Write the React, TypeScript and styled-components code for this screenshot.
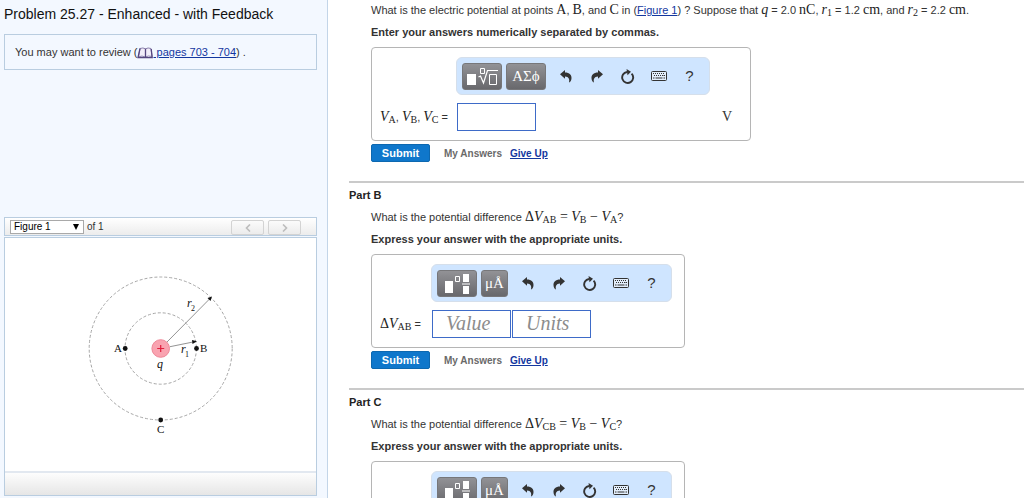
import React from "react";
import styled, { createGlobalStyle } from "styled-components";

const sans = `"Liberation Sans", Arial, sans-serif`;
const serif = `"Liberation Serif", "Times New Roman", serif`;

const GlobalStyle = createGlobalStyle`
  * { box-sizing: border-box; }
  body {
    margin: 0;
    background: #fff;
    color: #333;
    font-family: ${sans};
    font-size: 11px;
  }
`;

const Page = styled.div`
  display: flex;
  height: 100vh;
  overflow: hidden;
`;

const Sidebar = styled.aside`
  display: flex;
  flex-direction: column;
  flex: 0 0 328px;
  padding: 0 10px 2px 4px;
  border-right: 1px solid #c3d5e8;
  background: #f3f8ff;
`;

const Title = styled.h1`
  margin: 0 0 6px;
  color: #111;
  font-size: 14px;
  font-weight: 400;
  line-height: 28px;
  white-space: nowrap;
`;

const ReviewBox = styled.p`
  margin: 0;
  padding: 0 10px;
  border: 1px solid #b9cde0;
  line-height: 34px;
`;

const Link = styled.a`
  color: #13379f;
`;

const Book = styled.svg`
  width: 16px;
  height: 12px;
  vertical-align: -3px;
`;

const FigureBar = styled.div`
  display: flex;
  align-items: center;
  gap: 3px;
  height: 19px;
  margin: auto 0 1px;
  padding: 0 15px 0 5px;
  border: 1px solid #b9cde0;
  background: linear-gradient(#fff, #ececec);
  font-size: 10px;
`;

const SelectWrap = styled.label`
  display: grid;
  align-items: center;
  width: 74px;
  height: 14px;

  > * { grid-area: 1 / 1; }
  > svg { justify-self: end; margin-right: 5px; pointer-events: none; }
`;

const FigureSelect = styled.select`
  width: 100%;
  height: 14px;
  padding: 0 3px;
  appearance: none;
  border: 1px solid #a9a9a9;
  border-radius: 0;
  background: #fff;
  color: #000;
  font: 10px/12px ${sans};
`;

const Pager = styled.div`
  display: flex;
  gap: 4px;
  align-self: flex-end;
  margin-left: auto;
`;

const PagerButton = styled.button`
  display: flex;
  align-items: center;
  justify-content: center;
  width: 33px;
  height: 15px;
  padding: 0;
  border: 1px solid #d3d3d3;
  border-radius: 2px;
  background: linear-gradient(#fbfbfb, #ececec);
`;

const FigurePanel = styled.div`
  display: flex;
  flex-direction: column;
  height: 259px;
  border: 1px solid #b9cde0;
  background: #fff;
`;

const Diagram = styled.svg`
  align-self: center;
  width: 161px;
  height: 175px;
  margin-top: 27px;
  font-family: ${serif};
`;

const FigureFooter = styled.div`
  height: 24px;
  margin-top: auto;
  border-top: 2px solid #e2e8f0;
  background: linear-gradient(#fdfdfd, #e6e6e6);
`;

const Content = styled.main`
  flex: 1;
  min-width: 0;
  margin-top: -1px;
  padding-left: 21px;
  overflow-y: auto;
  scrollbar-width: none;
`;

const Part = styled.section`
  padding: 0 0 19px 22px;

  & + & { border-top: 2px solid #cacaca; }
`;

const PartTitle = styled.h2`
  margin: 0 0 0 -22px;
  padding-top: 2px;
  color: #222;
  font-size: 11px;
  line-height: 21px;
`;

const Line = styled.p<{ $strong?: boolean }>`
  margin: 0;
  font-weight: ${(p) => (p.$strong ? 700 : 400)};
  line-height: 22px;
  white-space: nowrap;
`;

const M = styled.span<{ $italic?: boolean }>`
  color: #222;
  font-family: ${serif};
  font-size: 14px;
  font-style: ${(p) => (p.$italic ? "italic" : "normal")};
  line-height: 14px;

  sub {
    font-size: 10px;
    font-style: normal;
    line-height: 0;
    vertical-align: -2px;
  }
`;

const AnswerBox = styled.div<{ $label: number; $width: number }>`
  display: grid;
  grid-template-columns: ${(p) => p.$label}px auto;
  justify-content: start;
  align-items: center;
  row-gap: 8px;
  width: ${(p) => p.$width}px;
  margin: 4px 0 3px;
  padding: 9px 8px;
  border: 1px solid #b5b5b5;
  border-radius: 4px;
`;

const Toolbar = styled.div`
  display: flex;
  grid-column: 2;
  align-items: center;
  justify-self: start;
  height: 38px;
  padding: 0 4px 0 5px;
  border: 1px solid #d5dfeb;
  border-radius: 6px;
  background: #cfe5ff;
`;

const Palette = styled.button<{ $narrow?: boolean }>`
  display: flex;
  align-items: center;
  justify-content: center;
  width: ${(p) => (p.$narrow ? 27 : 40)}px;
  height: 27px;
  margin-right: 4px;
  padding: 0;
  border: 1px solid #77777a;
  border-radius: 3px;
  background: linear-gradient(#929296, #68686c);
  color: #fff;
  font: 15px/20px ${serif};
`;

const Tool = styled.button`
  display: flex;
  align-items: center;
  justify-content: center;
  width: 31px;
  height: 28px;
  padding: 0;
  border: 0;
  background: none;
  color: #333;
  font: 15px/20px ${sans};
`;

const FieldLabel = styled.label`
  font-size: 11px;
  white-space: nowrap;
`;

const Fields = styled.div`
  display: flex;
  align-items: center;
  gap: 1px;
  padding-left: 1px;
`;

const Field = styled.input`
  width: 79px;
  height: 28px;
  padding: 0 13px;
  border: 1px solid #3e6bc8;
  background: #fff;
  font: 18px ${serif};

  &::placeholder {
    color: #8c8c8c;
    font: italic 20px ${serif};
    opacity: 1;
  }
`;

const Unit = styled.span`
  margin-left: 185px;
  font: 14px ${serif};
`;

const Actions = styled.div`
  display: flex;
  align-items: center;
  height: 18px;
  font-size: 10px;
  font-weight: 700;
`;

const Submit = styled.button`
  width: 59px;
  height: 18px;
  margin-right: 14px;
  padding: 0;
  border: 1px solid #0d68b0;
  border-radius: 2px;
  background: #0f77cb;
  color: #fff;
  font: 700 11px/16px ${sans};
`;

const Answers = styled.span`
  margin-right: 8px;
  color: #6a6a6a;
`;

const BookIcon = () => (
  <Book viewBox="0 0 16 12" aria-hidden="true">
    <path d="M3 1.5Q6 .3 8.500 1.800 11 .3 14 1.500L15 9.500Q11 8.300 8.500 10 5 8.300 1.500 9.800Z" fill="#f1edf9" stroke="#8a80ab" />
    <path d="M8.500 1.800V10M3 1.500 1 10.500 7.500 10.600H15.200L14.200 2" fill="none" stroke="#54457f" strokeWidth="1.300" />
  </Book>
);

const UndoIcon = ({ flip }: { flip?: boolean }) => (
  <svg width="12" height="13" viewBox="0 0 12 13" aria-hidden="true">
    <path
      transform={flip ? "matrix(-1 0 0 1 12 0)" : undefined}
      d="M0 4.200 5 0V2.400C9.500 2.400 11.700 4.900 11.500 8.200 11.400 10.300 10.500 12 9 12.600 9.700 9.200 9 6.600 5 6.400V8.800Z"
      fill="#333"
    />
  </svg>
);

const ResetIcon = () => (
  <svg width="15" height="15" viewBox="0 0 15 15" aria-hidden="true">
    <path d="M11.600 4.600A5.500 5.500 0 1 1 7 3" fill="none" stroke="#333" strokeWidth="1.900" />
    <path d="M6.500 0 11 2.800 7.500 6.200Z" fill="#333" />
  </svg>
);

const KeyboardIcon = () => (
  <svg width="16" height="10" viewBox="0 0 16 10" aria-hidden="true">
    <rect x=".5" y=".5" width="15" height="9" rx="1" fill="#e3eefb" stroke="#333" />
    <path d="M2 2.500H14M3 4.500H14" stroke="#333" strokeDasharray="1 1" />
    <path d="M2 7H3.500M4.500 7H11.500M12.500 7H14M12.500 4.500H14" stroke="#333" />
  </svg>
);

const RootIcon = () => (
  <svg width="32" height="19" viewBox="0 0 32 19" aria-hidden="true">
    <path d="M1 7H10V18H1Z" fill="#fff" />
    <path d="M14.500 1.500H18.500V6.500H14.500Z" fill="none" stroke="#fff" />
    <path d="M12.500 10 14.500 9 17.500 16 21.500 3.500H32" fill="none" stroke="#fff" strokeWidth="1.200" />
    <path d="M23.500 7.500H30.500V17.500H23.500Z" fill="none" stroke="#fff" />
  </svg>
);

const TemplateIcon = () => (
  <svg width="27" height="21" viewBox="0 0 27 21" aria-hidden="true">
    <path d="M1 8H9V20H1ZM19 1H25V9H19ZM19 13H25V21H19ZM18 10.500H26V11.500H18Z" fill="#fff" />
    <path d="M11.500 3.500H15.500V8.500H11.500Z" fill="none" stroke="#fff" />
  </svg>
);

const Chevron = ({ right }: { right?: boolean }) => (
  <svg width="6" height="8" viewBox="0 0 6 8" aria-hidden="true">
    <path d={right ? "M1 .5 4.500 4 1 7.500" : "M5 .5 1.500 4 5 7.500"} fill="none" stroke="#bdbdbd" strokeWidth="1.600" />
  </svg>
);

const ChargeDiagram = () => (
  <Diagram viewBox="0 0 161 175" role="img" aria-label="Charge q with points A, B and C">
    <g fill="none" stroke="#a6a6a6" strokeDasharray="3 2">
      <circle cx="80.700" cy="83.500" r="35.700" />
      <circle cx="80.700" cy="83.500" r="71.500" />
    </g>
    <path d="M87 77 130 33.500M90 81.700 114 76.800" stroke="#777" strokeWidth=".8" />
    <path d="M132 31.500 130.500 36 127.500 33ZM117 76.200 112.500 79 112 75Z" fill="#111" />
    <circle cx="80.700" cy="83.500" r="8.800" fill="#f9a3b0" stroke="#ee8797" />
    <path d="M77.200 83.500H84.200M80.700 80V87" stroke="#e0203e" strokeWidth="1.200" />
    <g fill="#111">
      <circle cx="45.200" cy="83.500" r="2.400" />
      <circle cx="116.500" cy="83.500" r="2.400" />
      <circle cx="80.700" cy="155" r="2.400" />
    </g>
    <g fill="#111" fontSize="11">
      <text x="34" y="87">A</text>
      <text x="120" y="87">B</text>
      <text x="77" y="168">C</text>
      <text x="77" y="103" fontSize="12" fontStyle="italic">q</text>
      <text x="101" y="88" fontSize="12" fontStyle="italic">r</text>
      <text x="105" y="92" fontSize="8">1</text>
      <text x="107" y="42" fontSize="12" fontStyle="italic">r</text>
      <text x="111" y="46" fontSize="8">2</text>
    </g>
  </Diagram>
);

const EditTools = () => (
  <>
    <Tool type="button" aria-label="Undo"><UndoIcon /></Tool>
    <Tool type="button" aria-label="Redo"><UndoIcon flip /></Tool>
    <Tool type="button" aria-label="Reset"><ResetIcon /></Tool>
    <Tool type="button" aria-label="Keyboard"><KeyboardIcon /></Tool>
    <Tool type="button" aria-label="Help">?</Tool>
  </>
);

const V = ({ sub }: { sub: string }) => (
  <M $italic>V<sub>{sub}</sub></M>
);

const PartActions = () => (
  <Actions>
    <Submit type="submit">Submit</Submit>
    <Answers>My Answers</Answers>
    <Link href="#give-up">Give Up</Link>
  </Actions>
);

interface DifferencePartProps {
  name: string;
  pair: string;
  from: string;
  to: string;
}

const DifferencePart = ({ name, pair, from, to }: DifferencePartProps) => (
  <Part>
    <PartTitle>Part {name}</PartTitle>
    <Line>
      What is the potential difference <M>Δ</M><V sub={pair} /><M> = </M><V sub={from} /><M> − </M><V sub={to} />?
    </Line>
    <Line $strong>Express your answer with the appropriate units.</Line>
    <AnswerBox $label={51} $width={314}>
      <Toolbar>
        <Palette type="button" aria-label="Templates"><TemplateIcon /></Palette>
        <Palette type="button" $narrow>μÅ</Palette>
        <EditTools />
      </Toolbar>
      <FieldLabel htmlFor={`value-${name}`}><M>Δ</M><V sub={pair} /> =</FieldLabel>
      <Fields>
        <Field id={`value-${name}`} placeholder="Value" />
        <Field aria-label="Units" placeholder="Units" />
      </Fields>
    </AnswerBox>
    <PartActions />
  </Part>
);

export default function App() {
  return (
    <>
      <GlobalStyle />
      <Page>
        <Sidebar>
          <Title>Problem 25.27 - Enhanced - with Feedback</Title>
          <ReviewBox>
            You may want to review (<Link href="#pages"><BookIcon /> pages 703 - 704</Link>) .
          </ReviewBox>
          <FigureBar>
            <SelectWrap>
              <FigureSelect aria-label="Figure">
                <option>Figure 1</option>
              </FigureSelect>
              <svg width="6" height="6" viewBox="0 0 6 6" aria-hidden="true">
                <path d="M0 0H6L3 6Z" fill="#000" />
              </svg>
            </SelectWrap>
            <span>of 1</span>
            <Pager>
              <PagerButton type="button" aria-label="Previous figure"><Chevron /></PagerButton>
              <PagerButton type="button" aria-label="Next figure"><Chevron right /></PagerButton>
            </Pager>
          </FigureBar>
          <FigurePanel>
            <ChargeDiagram />
            <FigureFooter />
          </FigurePanel>
        </Sidebar>
        <Content>
          <Part>
            <Line>
              What is the electric potential at points <M>A</M>, <M>B</M>, and <M>C</M> in (<Link href="#figure">Figure 1</Link>) ? Suppose that <M $italic>q</M> = 2.0 <M>nC</M>, <M $italic>r<sub>1</sub></M> = 1.2 <M>cm</M>, and <M $italic>r<sub>2</sub></M> = 2.2 <M>cm</M>.
            </Line>
            <Line $strong>Enter your answers numerically separated by commas.</Line>
            <AnswerBox $label={76} $width={380}>
              <Toolbar>
                <Palette type="button" aria-label="Roots"><RootIcon /></Palette>
                <Palette type="button">ΑΣϕ</Palette>
                <EditTools />
              </Toolbar>
              <FieldLabel htmlFor="potentials"><V sub="A" />, <V sub="B" />, <V sub="C" /> =</FieldLabel>
              <Fields>
                <Field id="potentials" />
                <Unit>V</Unit>
              </Fields>
            </AnswerBox>
            <PartActions />
          </Part>
          <DifferencePart name="B" pair="AB" from="B" to="A" />
          <DifferencePart name="C" pair="CB" from="B" to="C" />
        </Content>
      </Page>
    </>
  );
}
